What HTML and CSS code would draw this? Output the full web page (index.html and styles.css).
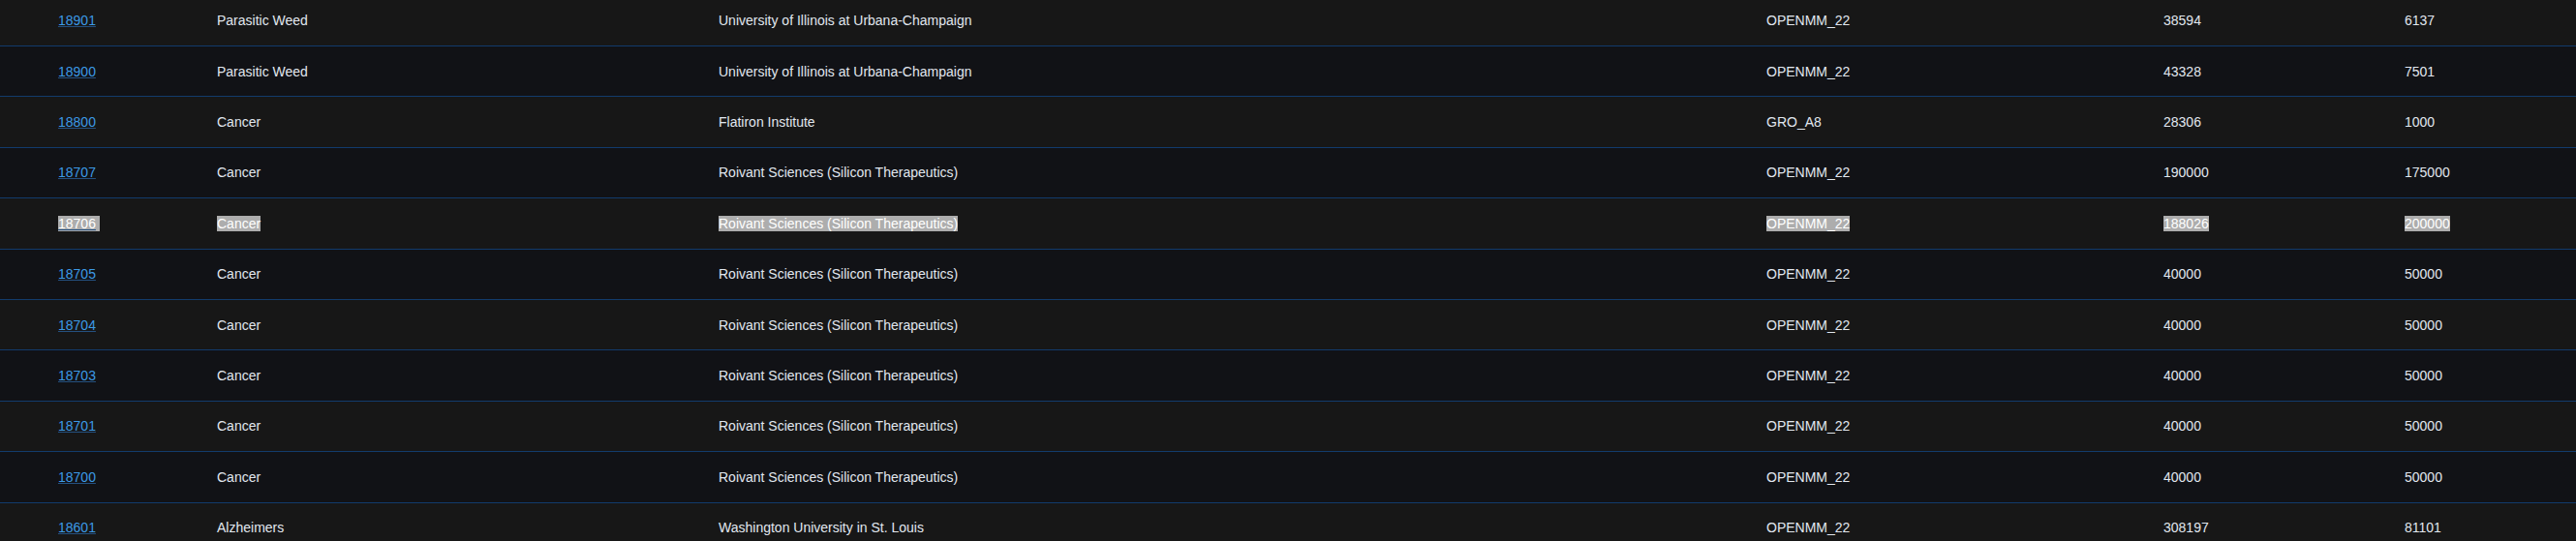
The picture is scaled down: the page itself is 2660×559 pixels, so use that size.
FILE: index.html
```html
<!DOCTYPE html>
<html lang="en">
<head>
<meta charset="utf-8">
<title>Projects</title>
<link rel="stylesheet" href="styles.css">
</head>
<body>
<div class="viewport">
<table class="projects">
  <colgroup>
    <col class="c-id"><col class="c-cause"><col class="c-owner"><col class="c-core"><col class="c-atoms"><col class="c-points">
  </colgroup>
  <tbody>
    <tr><td class="id"><a href="#">18901</a></td><td>Parasitic Weed</td><td>University of Illinois at Urbana-Champaign</td><td>OPENMM_22</td><td>38594</td><td>6137</td></tr>
    <tr><td class="id"><a href="#">18900</a></td><td>Parasitic Weed</td><td>University of Illinois at Urbana-Champaign</td><td>OPENMM_22</td><td>43328</td><td>7501</td></tr>
    <tr><td class="id"><a href="#">18800</a></td><td>Cancer</td><td>Flatiron Institute</td><td>GRO_A8</td><td>28306</td><td>1000</td></tr>
    <tr><td class="id"><a href="#">18707</a></td><td>Cancer</td><td>Roivant Sciences (Silicon Therapeutics)</td><td>OPENMM_22</td><td>190000</td><td>175000</td></tr>
    <tr class="selected"><td class="id"><a href="#"><span class="sel sel-trail">18706</span></a></td><td><span class="sel">Cancer</span></td><td><span class="sel">Roivant Sciences (Silicon Therapeutics)</span></td><td><span class="sel">OPENMM_22</span></td><td><span class="sel">188026</span></td><td><span class="sel">200000</span></td></tr>
    <tr><td class="id"><a href="#">18705</a></td><td>Cancer</td><td>Roivant Sciences (Silicon Therapeutics)</td><td>OPENMM_22</td><td>40000</td><td>50000</td></tr>
    <tr><td class="id"><a href="#">18704</a></td><td>Cancer</td><td>Roivant Sciences (Silicon Therapeutics)</td><td>OPENMM_22</td><td>40000</td><td>50000</td></tr>
    <tr><td class="id"><a href="#">18703</a></td><td>Cancer</td><td>Roivant Sciences (Silicon Therapeutics)</td><td>OPENMM_22</td><td>40000</td><td>50000</td></tr>
    <tr><td class="id"><a href="#">18701</a></td><td>Cancer</td><td>Roivant Sciences (Silicon Therapeutics)</td><td>OPENMM_22</td><td>40000</td><td>50000</td></tr>
    <tr><td class="id"><a href="#">18700</a></td><td>Cancer</td><td>Roivant Sciences (Silicon Therapeutics)</td><td>OPENMM_22</td><td>40000</td><td>50000</td></tr>
    <tr><td class="id"><a href="#">18601</a></td><td>Alzheimers</td><td>Washington University in St. Louis</td><td>OPENMM_22</td><td>308197</td><td>81101</td></tr>
  </tbody>
</table>
</div>
</body>
</html>
```

FILE: styles.css
```css
html, body {
  margin: 0;
  padding: 0;
  background: #171717;
  overflow: hidden;
}

.viewport {
  height: 559px;
  overflow: hidden;
}

.projects {
  width: 2660px;
  table-layout: fixed;
  border-collapse: separate;
  border-spacing: 0;
  margin-top: -4.4px;
  font-family: "Liberation Sans", Arial, sans-serif;
  font-size: 14px;
  color: #e1e7ef;
}

.c-id { width: 224px; }
.c-cause { width: 518px; }
.c-owner { width: 1082px; }
.c-core { width: 410px; }
.c-atoms { width: 249px; }
.c-points { width: 177px; }

.projects td {
  height: 51.4px;
  padding: 0;
  line-height: 16px;
  vertical-align: middle;
  white-space: nowrap;
  border-bottom: 1px solid #123b6c;
  box-sizing: content-box;
}

.projects tr:nth-child(odd) td { background: #171717; }
.projects tr:nth-child(even) td { background: #111216; }

.projects td.id { padding-left: 60px; }

.projects a {
  color: #3c9ae6;
  text-decoration: underline;
  text-decoration-color: #24507f;
}

.sel {
  background: #adadad;
  color: #ffffff;
}

.sel-trail { padding-right: 4px; }
```
